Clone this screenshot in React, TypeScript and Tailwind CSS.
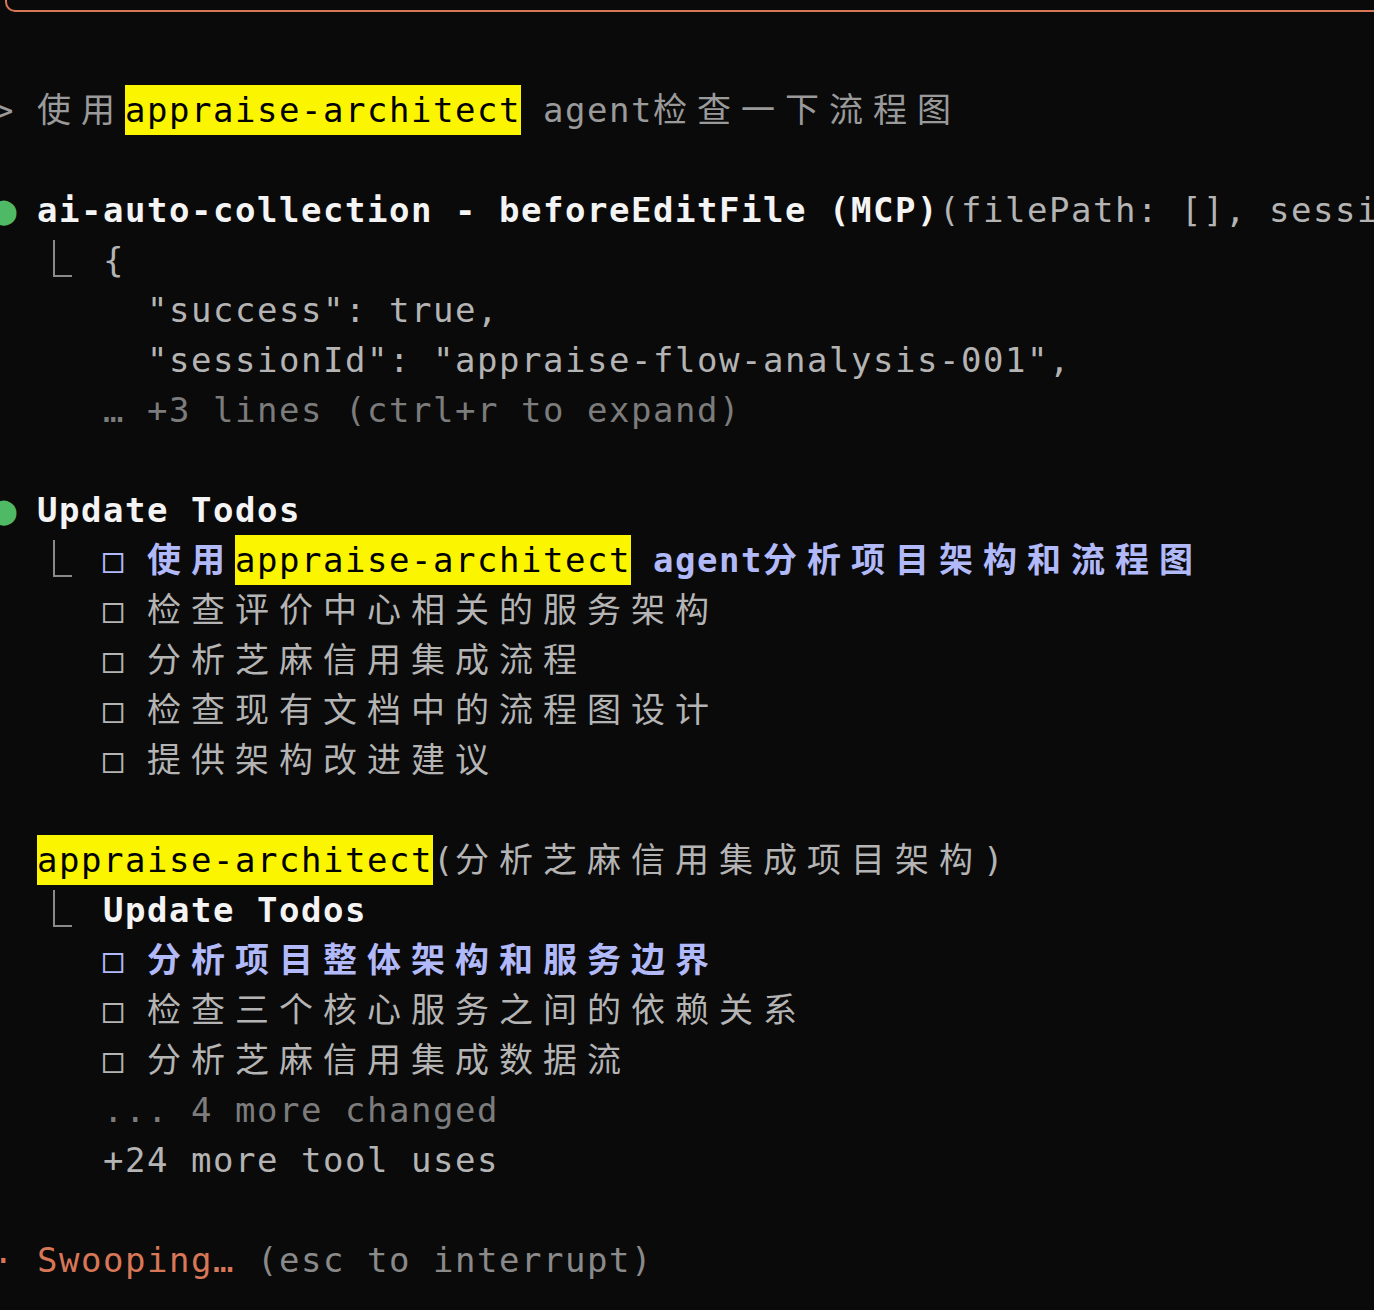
import type { ReactNode } from "react"
import clsx from "clsx"

// terminal grid: 22px per cell, 50px per row
const GRAY = "text-[#b4b4b4]"
const DIM = "text-[#7c7c7c]"
const LAVENDER = "text-[#b1b9f9] font-bold"
const WHITE = "text-[#f4f4f4] font-bold"

function Row({ children }: { children?: ReactNode }) {
  return <div className="flex h-[50px] items-stretch whitespace-pre leading-[50px]">{children}</div>
}

function Cjk({ children, className }: { children: ReactNode; className?: string }) {
  return <span className={clsx("tracking-[10px]", className)}>{children}</span>
}

function Mark({ children }: { children: ReactNode }) {
  return <span className="bg-[#fbf500] font-normal text-black">{children}</span>
}

// the ⎿ connector, three cells wide
function Corner() {
  return (
    <span className="w-[66px] shrink-0">
      <span className="ml-[16px] mt-[5px] block h-[37px] w-[19px] border-b-2 border-l-2 border-[#8a8a8a]" />
    </span>
  )
}

function Dot() {
  return <span className="w-[44px] shrink-0 text-center text-[42px] leading-[50px] tracking-normal text-[#4eba65] -indent-[22px]">●</span>
}

export default function App() {
  const todos = ["检查评价中心相关的服务架构", "分析芝麻信用集成流程", "检查现有文档中的流程图设计", "提供架构改进建议"]
  const subTodos = ["检查三个核心服务之间的依赖关系", "分析芝麻信用集成数据流"]

  return (
    <div className="min-h-screen w-full overflow-hidden bg-[#0a0a0a] font-['DejaVu_Sans_Mono','Noto_Sans_CJK_SC',monospace] text-[34px] tracking-[1.53px]">
      <div className="-mr-[40px] ml-[5px] h-[12px] rounded-bl-[10px] border-b-2 border-l-2 border-[#d77757]" />

      <div className="-ml-[7px] pt-[73px]">
        <Row>
          <span className="text-[#9a9a9a]">&gt; </span>
          <Cjk className="text-[#9a9a9a]">使用</Cjk>
          <Mark>appraise-architect</Mark>
          <span className="text-[#9a9a9a]"> agent</span>
          <Cjk className="text-[#9a9a9a]">检查一下流程图</Cjk>
        </Row>
        <Row />

        <Row>
          <Dot />
          <span className={WHITE}>ai-auto-collection - beforeEditFile (MCP)</span>
          <span className={GRAY}>(filePath: [], sessionId: "appraise-flow-analysis-001")</span>
        </Row>
        <Row>
          <span>  </span>
          <Corner />
          <span className={GRAY}>{"{"}</span>
        </Row>
        <Row>
          <span className={GRAY}>{'       "success": true,'}</span>
        </Row>
        <Row>
          <span className={GRAY}>{'       "sessionId": "appraise-flow-analysis-001",'}</span>
        </Row>
        <Row>
          <span className={DIM}>     … +3 lines (ctrl+r to expand)</span>
        </Row>
        <Row />

        <Row>
          <Dot />
          <span className={WHITE}>Update Todos</span>
        </Row>
        <Row>
          <span>  </span>
          <Corner />
          <span className={LAVENDER}>□ </span>
          <Cjk className={LAVENDER}>使用</Cjk>
          <Mark>appraise-architect</Mark>
          <span className={LAVENDER}> agent</span>
          <Cjk className={LAVENDER}>分析项目架构和流程图</Cjk>
        </Row>
        {todos.map(t => (
          <Row key={t}>
            <span className={GRAY}>     □ </span>
            <Cjk className={GRAY}>{t}</Cjk>
          </Row>
        ))}
        <Row />

        <Row>
          <span>  </span>
          <Mark>appraise-architect</Mark>
          <span className={GRAY}>(</span>
          <Cjk className={GRAY}>分析芝麻信用集成项目架构</Cjk>
          <span className={GRAY}>)</span>
        </Row>
        <Row>
          <span>  </span>
          <Corner />
          <span className={WHITE}>Update Todos</span>
        </Row>
        <Row>
          <span className={LAVENDER}>     □ </span>
          <Cjk className={LAVENDER}>分析项目整体架构和服务边界</Cjk>
        </Row>
        {subTodos.map(t => (
          <Row key={t}>
            <span className={GRAY}>     □ </span>
            <Cjk className={GRAY}>{t}</Cjk>
          </Row>
        ))}
        <Row>
          <span className={DIM}>     ... 4 more changed</span>
        </Row>
        <Row>
          <span className={GRAY}>     +24 more tool uses</span>
        </Row>
        <Row />

        <Row>
          <span className="text-[#d77757]">· Swooping…</span>
          <span className="text-[#8a8a8a]"> (esc to interrupt)</span>
        </Row>
      </div>
    </div>
  )
}
